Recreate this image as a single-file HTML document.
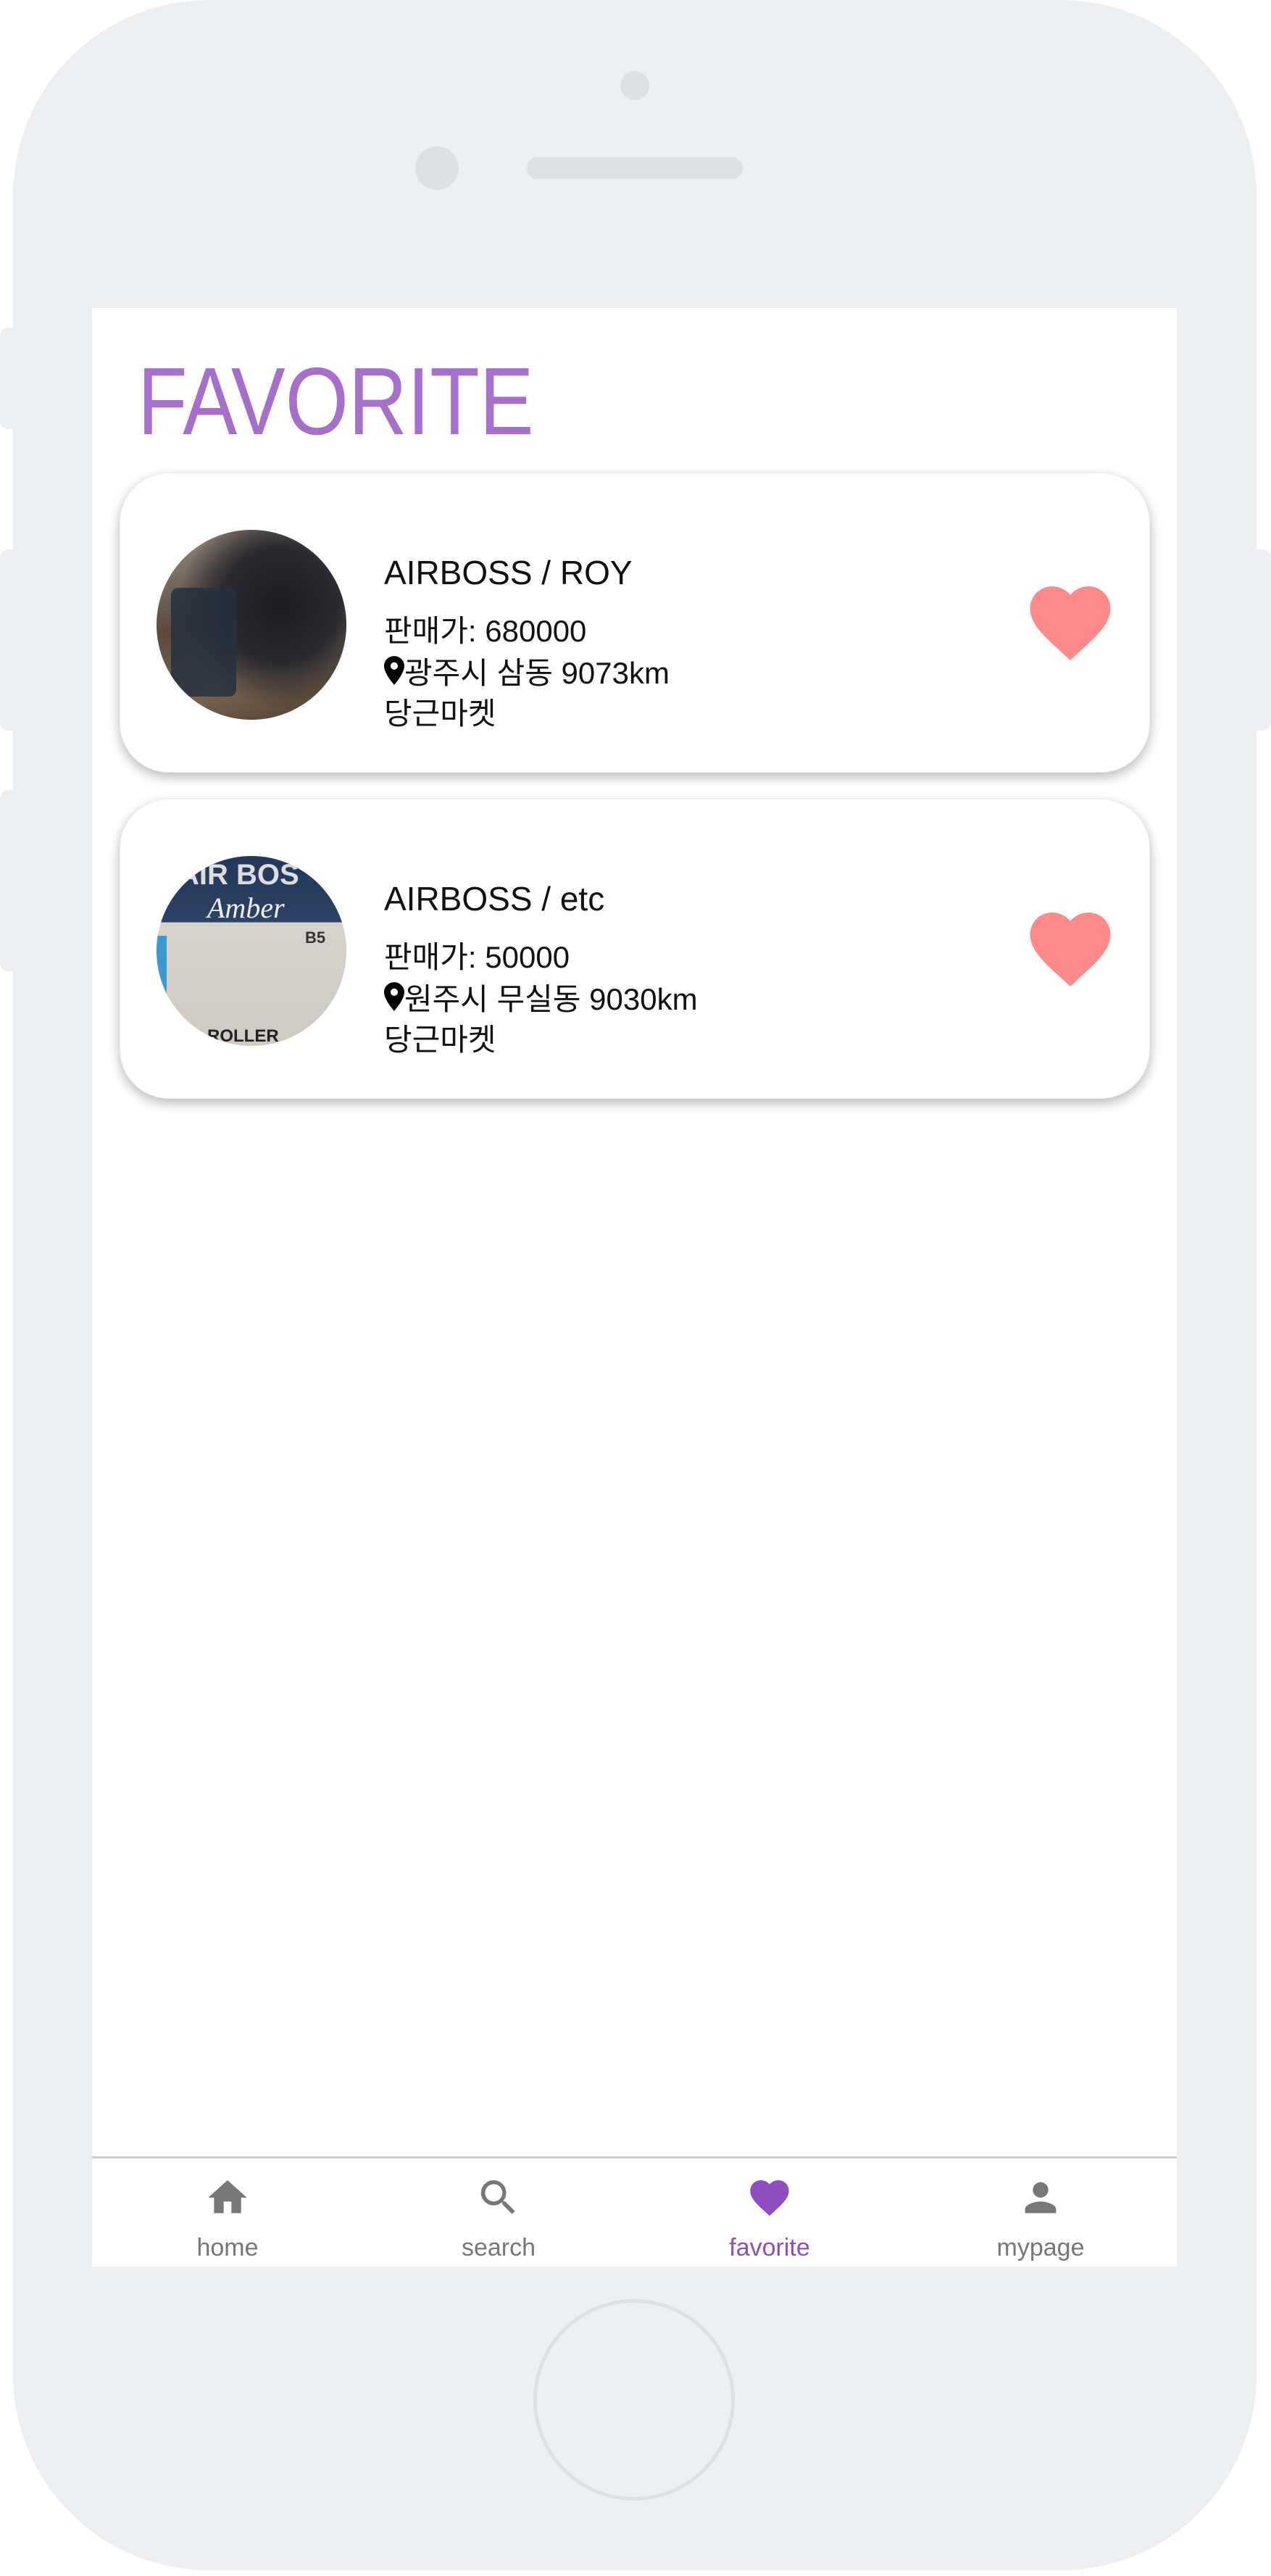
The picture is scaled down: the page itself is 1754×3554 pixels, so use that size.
<!DOCTYPE html>
<html><head><meta charset="utf-8"><style>
*{margin:0;padding:0;box-sizing:border-box}
body{width:1754px;height:3554px;background:#fff;position:relative;overflow:hidden;font-family:"Liberation Sans","Noto Sans CJK KR",sans-serif}
.body{position:absolute;left:18px;top:0;width:1716px;height:3546px;background:#edf0f3;border-radius:270px}
.btn{position:absolute;left:0;width:30px;background:#edf0f3;border-radius:12px}
.btnr{position:absolute;right:0;width:30px;background:#edf0f3;border-radius:12px}
.screen{position:absolute;left:127px;top:425px;width:1497px;height:2702px;background:#fff}
.title{position:absolute;left:190px;top:478px;font-size:132px;color:#a66fca;transform:scaleX(0.85);transform-origin:0 0}
.card{position:absolute;left:165px;width:1422px;height:414px;background:#fff;border-radius:68px;box-shadow:0 6px 16px rgba(0,0,0,.28);border:1px solid #eee}
.img{position:absolute;left:50px;top:78px;width:262px;height:262px;border-radius:50%;overflow:hidden}
.t{position:absolute;left:364px;font-size:46px;color:#111}
.l{position:absolute;left:364px;font-size:42px;color:#111;white-space:nowrap}
.l svg{vertical-align:-2px}
.heart{position:absolute;left:1255px;top:156px}
.nav{position:absolute;left:127px;top:2975px;width:1497px;height:152px;border-top:3px solid #ccc;background:#fff}
.item{position:absolute;top:0;width:300px;margin-left:-150px;text-align:center}
.item svg{position:absolute;left:118px;top:22px}
.item span{position:absolute;left:0;right:0;top:104px;font-size:34px;color:#777}
</style></head><body>
<div class="body"></div>
<div class="btn" style="top:452px;height:140px"></div>
<div class="btn" style="top:758px;height:250px"></div>
<div class="btn" style="top:1090px;height:250px"></div>
<div class="btnr" style="top:758px;height:250px"></div>
<div style="position:absolute;left:856px;top:98px;width:40px;height:40px;border-radius:50%;background:#dde1e5"></div>
<div style="position:absolute;left:573px;top:202px;width:60px;height:60px;border-radius:50%;background:#dde1e5"></div>
<div style="position:absolute;left:727px;top:217px;width:298px;height:30px;border-radius:15px;background:#dde1e5"></div>
<div style="position:absolute;left:736px;top:3172px;width:278px;height:278px;border-radius:50%;border:5px solid #dde1e5"></div>
<div class="screen"></div>
<div class="title">FAVORITE</div>

<div class="card" style="top:652px">
 <div class="img" style="background:radial-gradient(circle at 65% 40%,#1c1c22 0,#2a2a30 35%,transparent 60%),linear-gradient(160deg,#9a9088 0%,#5a4a3c 40%,#7a6450 70%,#4a3a2c 100%)">
  <div style="position:absolute;left:20px;top:80px;width:90px;height:150px;background:#263040;border-radius:10px;opacity:.85"></div>
 </div>
 <div class="t" style="top:110px">AIRBOSS / ROY</div>
 <div class="l" style="top:184px">판매가: 680000</div>
 <div class="l" style="top:242px"><svg width="28" height="40" viewBox="0 0 24 34"><path d="M12 0C5.4 0 0 5.2 0 11.7 0 20.5 12 34 12 34s12-13.5 12-22.3C24 5.2 18.6 0 12 0zm0 16a4.3 4.3 0 1 1 0-8.6 4.3 4.3 0 0 1 0 8.6z" fill="#000"/></svg>광주시 삼동 9073km</div>
 <div class="l" style="top:298px">당근마켓</div>
 <svg class="heart" width="112" height="102" viewBox="2 3 20 18.4"><path d="M12 21.4 10.5 20C5.4 15.4 2 12.3 2 8.5 2 5.4 4.4 3 7.5 3c1.7 0 3.4.8 4.5 2.1C13.1 3.8 14.8 3 16.5 3 19.6 3 22 5.4 22 8.5c0 3.8-3.4 6.9-8.5 11.5z" fill="#fe8a8a"/></svg>
</div>

<div class="card" style="top:1102px">
 <div class="img" style="background:linear-gradient(180deg,#22385a 0,#2c4266 35%,#d6d2cc 35%,#cfcac3 100%)">
  <div style="position:absolute;left:30px;top:4px;font:bold 40px 'Liberation Sans';color:#ddd">AIR BOS</div>
  <div style="position:absolute;left:70px;top:48px;font:italic 40px 'Liberation Serif';color:#eee">Amber</div>
  <div style="position:absolute;left:205px;top:100px;font:bold 22px 'Liberation Sans';color:#333">B5</div>
  <div style="position:absolute;left:70px;top:235px;font:bold 24px 'Liberation Sans';color:#222">ROLLER</div>
  <div style="position:absolute;left:0;top:110px;width:14px;height:120px;background:#3a9ad0"></div>
 </div>
 <div class="t" style="top:110px">AIRBOSS / etc</div>
 <div class="l" style="top:184px">판매가: 50000</div>
 <div class="l" style="top:242px"><svg width="28" height="40" viewBox="0 0 24 34"><path d="M12 0C5.4 0 0 5.2 0 11.7 0 20.5 12 34 12 34s12-13.5 12-22.3C24 5.2 18.6 0 12 0zm0 16a4.3 4.3 0 1 1 0-8.6 4.3 4.3 0 0 1 0 8.6z" fill="#000"/></svg>원주시 무실동 9030km</div>
 <div class="l" style="top:298px">당근마켓</div>
 <svg class="heart" width="112" height="102" viewBox="2 3 20 18.4"><path d="M12 21.4 10.5 20C5.4 15.4 2 12.3 2 8.5 2 5.4 4.4 3 7.5 3c1.7 0 3.4.8 4.5 2.1C13.1 3.8 14.8 3 16.5 3 19.6 3 22 5.4 22 8.5c0 3.8-3.4 6.9-8.5 11.5z" fill="#fe8a8a"/></svg>
</div>

<div class="nav">
 <div class="item" style="left:187px"><svg width="64" height="64" viewBox="0 0 24 24"><path d="M10 20v-6h4v6h5v-8h3L12 3 2 12h3v8z" fill="#777"/></svg><span>home</span></div>
 <div class="item" style="left:561px"><svg width="64" height="64" viewBox="0 0 24 24"><path d="M15.5 14h-.8l-.3-.3A6.5 6.5 0 1 0 9.5 16a6.5 6.5 0 0 0 4.2-1.6l.3.3v.8l5 5 1.5-1.5zm-6 0A4.5 4.5 0 1 1 14 9.5 4.5 4.5 0 0 1 9.5 14z" fill="#777"/></svg><span>search</span></div>
 <div class="item" style="left:935px"><svg width="64" height="64" viewBox="0 0 24 24"><path d="M12 21.4 10.5 20C5.4 15.4 2 12.3 2 8.5 2 5.4 4.4 3 7.5 3c1.7 0 3.4.8 4.5 2.1C13.1 3.8 14.8 3 16.5 3 19.6 3 22 5.4 22 8.5c0 3.8-3.4 6.9-8.5 11.5z" fill="#8e4ec0"/></svg><span style="color:#8e4ec0">favorite</span></div>
 <div class="item" style="left:1309px"><svg width="64" height="64" viewBox="0 0 24 24"><path d="M12 12a4 4 0 1 0 0-8 4 4 0 0 0 0 8zm0 2c-2.7 0-8 1.3-8 4v2h16v-2c0-2.7-5.3-4-8-4z" fill="#777"/></svg><span>mypage</span></div>
</div>
</body></html>
